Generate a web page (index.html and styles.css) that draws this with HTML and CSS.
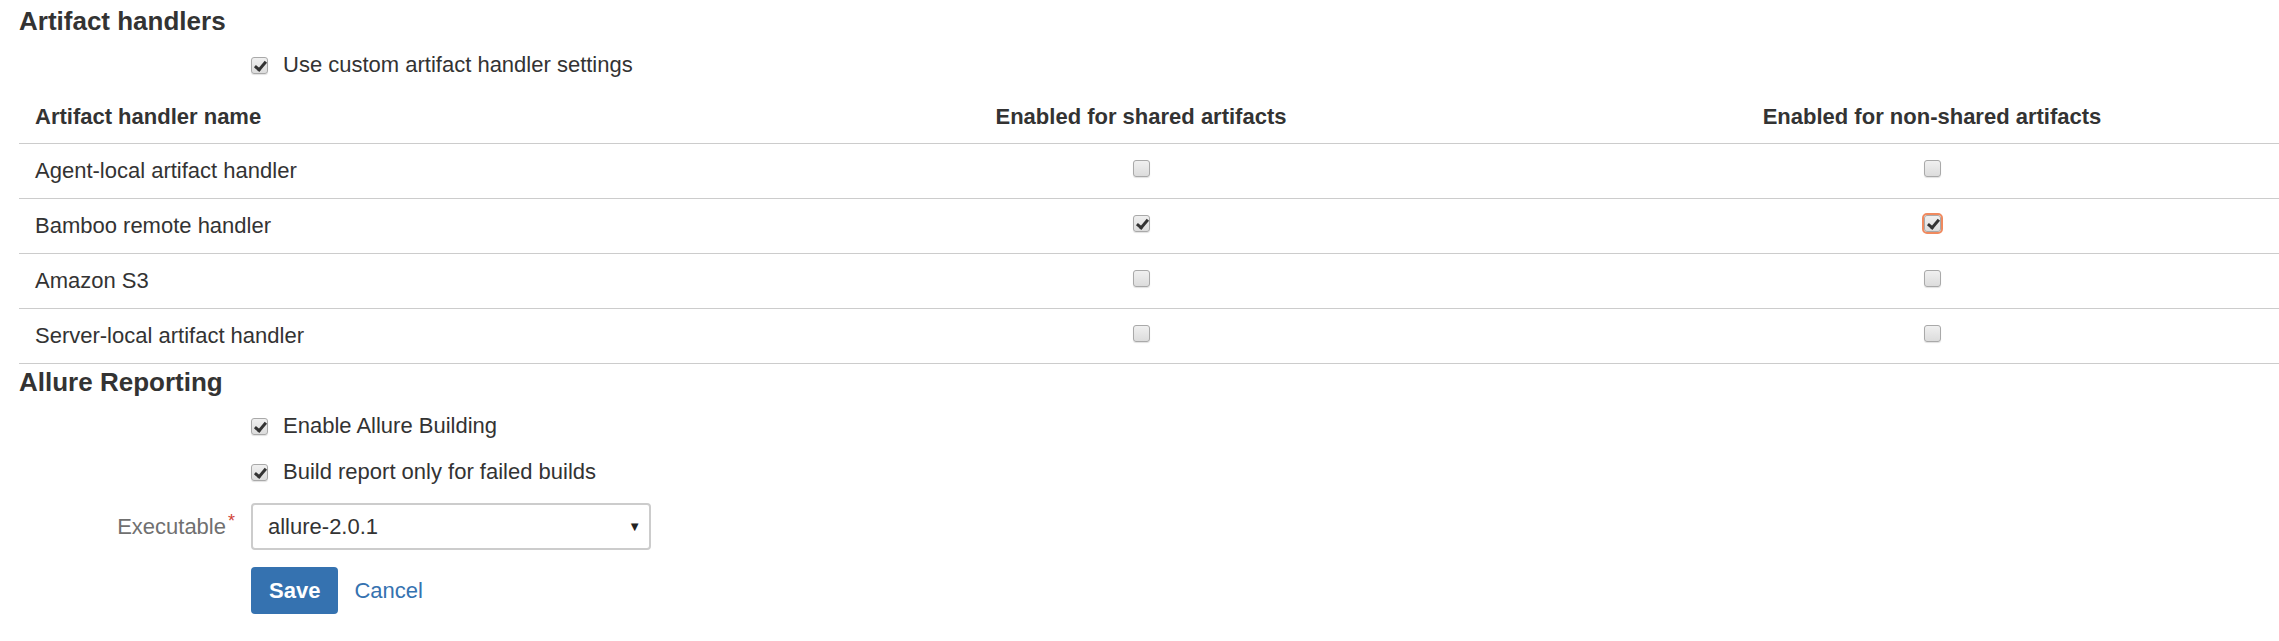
FILE: index.html
```html
<!DOCTYPE html>
<html>
<head>
  <meta charset="UTF-8">
  <title>Artifact handlers</title>
  <link rel="stylesheet" href="styles.css">
</head>
<body>
  <div class="page">
    <h2>Artifact handlers</h2>
    <div class="check-row">
      <span class="cb checked"></span>
      <span>Use custom artifact handler settings</span>
    </div>

    <table class="handlers">
      <colgroup>
        <col class="col-name">
        <col class="col-shared">
        <col class="col-nonshared">
      </colgroup>
      <thead>
        <tr>
          <th class="name">Artifact handler name</th>
          <th>Enabled for shared artifacts</th>
          <th>Enabled for non-shared artifacts</th>
        </tr>
      </thead>
      <tbody>
        <tr>
          <td class="name">Agent-local artifact handler</td>
          <td><span class="cb"></span></td>
          <td><span class="cb"></span></td>
        </tr>
        <tr>
          <td class="name">Bamboo remote handler</td>
          <td><span class="cb checked"></span></td>
          <td><span class="cb checked focused"></span></td>
        </tr>
        <tr>
          <td class="name">Amazon S3</td>
          <td><span class="cb"></span></td>
          <td><span class="cb"></span></td>
        </tr>
        <tr>
          <td class="name">Server-local artifact handler</td>
          <td><span class="cb"></span></td>
          <td><span class="cb"></span></td>
        </tr>
      </tbody>
    </table>

    <h2 class="section">Allure Reporting</h2>
    <div class="check-row">
      <span class="cb checked"></span>
      <span>Enable Allure Building</span>
    </div>
    <div class="check-row spaced">
      <span class="cb checked"></span>
      <span>Build report only for failed builds</span>
    </div>

    <div class="field-row">
      <label class="field-label">Executable<span class="required">*</span></label>
      <div class="select">
        <span>allure-2.0.1</span>
        <span class="arrow">&#9660;</span>
      </div>
    </div>

    <div class="buttons">
      <button class="btn-save">Save</button>
      <a class="cancel" href="#">Cancel</a>
    </div>
  </div>
</body>
</html>
```

FILE: styles.css
```css
body {
  margin: 0;
  background: #fff;
  color: #333;
  font-family: "Liberation Sans", Arial, sans-serif;
  font-size: 22px;
  line-height: 30px;
}

.page {
  padding-left: 19px;
}

h2 {
  margin: 6px 0 0;
  font-size: 26px;
  line-height: 30px;
  font-weight: bold;
}

h2.section {
  margin-top: 3px;
}

.check-row {
  display: flex;
  align-items: center;
  gap: 15px;
  margin-top: 14px;
  padding-left: 232px;
  height: 30px;
}

.check-row.spaced {
  margin-top: 16px;
}

/* checkbox look */
.cb {
  position: relative;
  display: block;
  flex: none;
  box-sizing: border-box;
  width: 17px;
  height: 17px;
  border: 1px solid #a9a9a9;
  border-radius: 3px;
  background: linear-gradient(#f0f0f0, #dcdcdc);
  box-shadow: 0 1px 1px rgba(0, 0, 0, 0.12);
}

.cb.checked::after {
  content: "";
  position: absolute;
  left: 5px;
  top: 1px;
  width: 4px;
  height: 9px;
  border-right: 3px solid #333;
  border-bottom: 3px solid #333;
  transform: rotate(40deg);
}

.cb.focused {
  outline: 2px solid #f08a5f;
  outline-offset: 0;
}

.handlers {
  margin-top: 11px;
  width: 100%;
  border-collapse: collapse;
  table-layout: fixed;
}

.col-name { width: 678px; }
.col-shared { width: 888px; }
.col-nonshared { width: 694px; }

.handlers th {
  padding: 11px 16px;
  text-align: center;
  font-weight: bold;
  border-bottom: 1px solid #ccc;
}

.handlers td {
  padding: 12px 16px;
  vertical-align: top;
  border-bottom: 1px solid #ccc;
}

.handlers th.name,
.handlers td.name {
  text-align: left;
}

.handlers td .cb {
  margin: 4px auto 0;
}

.field-row {
  display: grid;
  grid-template-columns: 216px 400px;
  column-gap: 16px;
  align-items: center;
  margin-top: 16px;
}

.field-label {
  text-align: right;
  color: #707070;
}

.required {
  color: #d04437;
  font-size: 18px;
  vertical-align: top;
  line-height: 18px;
  margin-left: 2px;
}

.select {
  display: flex;
  align-items: center;
  justify-content: space-between;
  box-sizing: border-box;
  height: 47px;
  padding: 0 8px 0 15px;
  border: 2px solid #ccc;
  border-radius: 4px;
  background: #fff;
}

.select .arrow {
  font-size: 13px;
  color: #222;
}

.buttons {
  display: flex;
  align-items: center;
  gap: 16px;
  margin-top: 17px;
  padding-left: 232px;
}

.btn-save {
  height: 47px;
  padding: 0 18px;
  border: none;
  border-radius: 4px;
  background: #3572b0;
  color: #fff;
  font-family: inherit;
  font-size: 22px;
  font-weight: bold;
}

.cancel {
  color: #3572b0;
  text-decoration: none;
}
```
